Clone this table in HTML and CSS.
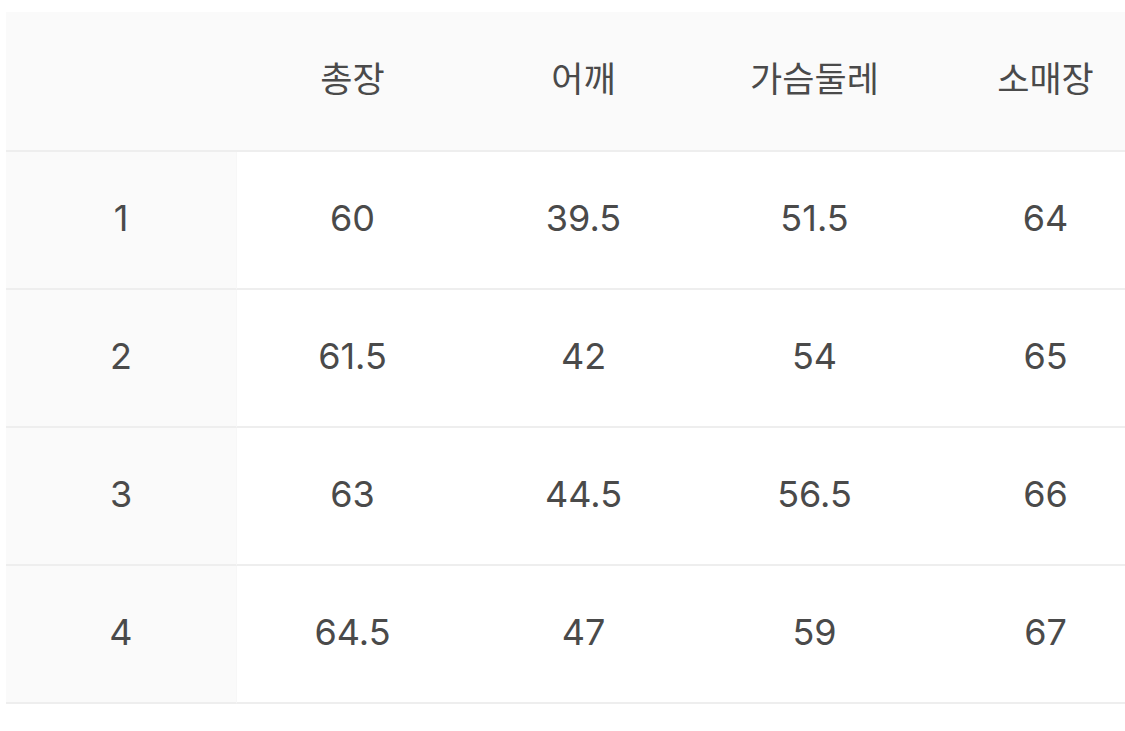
FILE: index.html
```html
<!DOCTYPE html>
<html lang="ko">
<head>
<meta charset="utf-8">
<link rel="stylesheet" href="styles.css">
</head>
<body>
<table class="size-table">
  <thead>
    <tr>
      <th class="label"></th>
      <th>총장</th>
      <th>어깨</th>
      <th>가슴둘레</th>
      <th>소매장</th>
    </tr>
  </thead>
  <tbody>
    <tr><td class="label">1</td><td>60</td><td>39.5</td><td>51.5</td><td>64</td></tr>
    <tr><td class="label">2</td><td>61.5</td><td>42</td><td>54</td><td>65</td></tr>
    <tr><td class="label">3</td><td>63</td><td>44.5</td><td>56.5</td><td>66</td></tr>
    <tr><td class="label">4</td><td>64.5</td><td>47</td><td>59</td><td>67</td></tr>
  </tbody>
</table>
</body>
</html>
```
FILE: styles.css
```css
html, body {
  margin: 0;
  background: #ffffff;
  overflow: hidden;
}
body {
  padding: 12px 0 0 6px;
  font-family: "Inter", "Noto Sans CJK KR", sans-serif;
  color: #4a4a4a;
}
.size-table {
  border-collapse: separate;
  border-spacing: 0;
  table-layout: fixed;
  width: 1155px;
}
.size-table th,
.size-table td {
  box-sizing: content-box;
  width: 231px;
  height: 136px;
  padding: 0;
  text-align: center;
  vertical-align: middle;
  font-size: 36px;
  line-height: 1;
  font-weight: 400;
  border-bottom: 2px solid #eeeeee;
}
.size-table td {
  padding-bottom: 4px;
  height: 132px;
}
.size-table thead th {
  background: #fafafa;
  font-family: "Noto Sans CJK KR", sans-serif;
  font-size: 35px;
  padding-bottom: 10px;
  height: 128px;
}
.size-table td.label {
  background: #fafafa;
  border-right: 1px solid #f7f7f7;
}
```
